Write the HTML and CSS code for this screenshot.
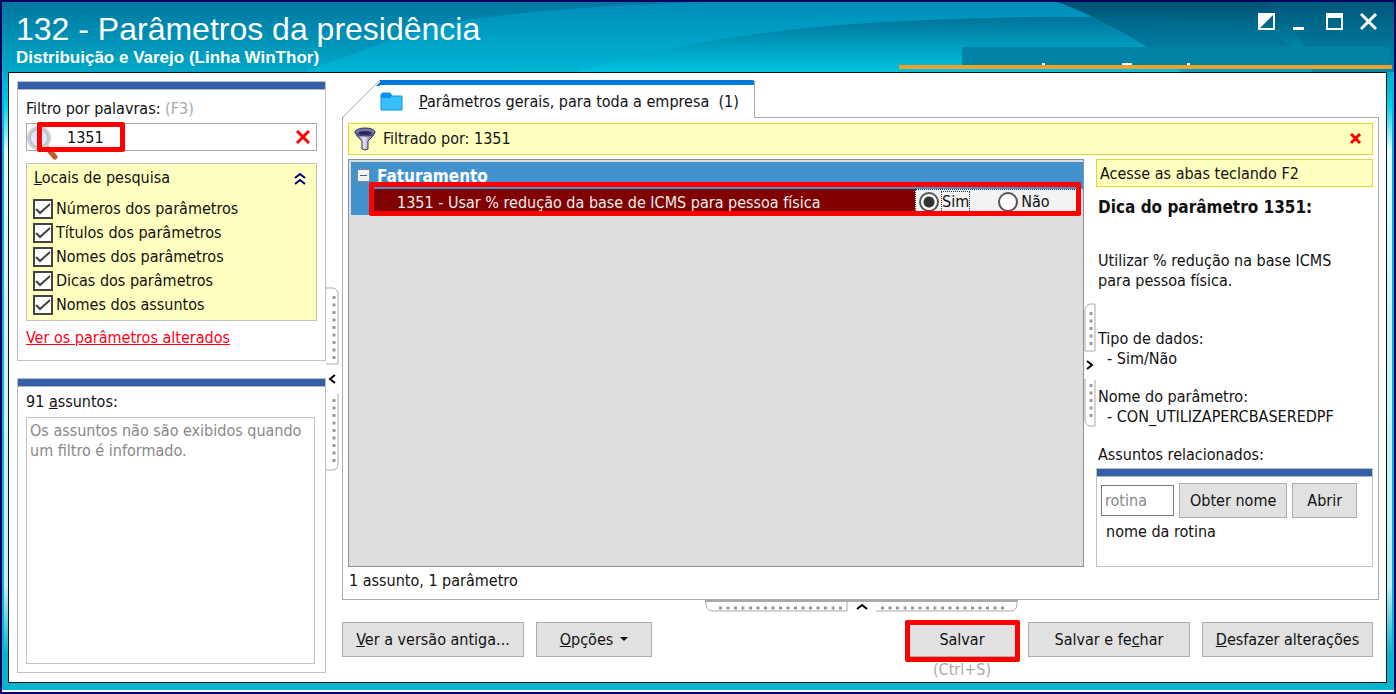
FILE: index.html
```html
<!DOCTYPE html>
<html lang="pt-BR">
<head>
    <meta charset="UTF-8">
    <meta name="viewport" content="width=device-width, initial-scale=1.0">
    <title>132 - Parâmetros da presidência</title>
    <link rel="stylesheet" href="styles.css">
</head>
<body>
    <div class="window">
        <header class="titlebar">
            <svg class="waves" viewBox="0 0 1392 70" preserveAspectRatio="none" aria-hidden="true">
                <defs>
                    <linearGradient id="base" x1="0" y1="0" x2="0" y2="1">
                        <stop offset="0" stop-color="#0077a0"/>
                        <stop offset="1" stop-color="#00a9c9"/>
                    </linearGradient>
                    <linearGradient id="mid" x1="0" y1="0" x2="0" y2="1">
                        <stop offset="0" stop-color="#008db8"/>
                        <stop offset="1" stop-color="#00b4d4"/>
                    </linearGradient>
                    <linearGradient id="low" x1="0" y1="0" x2="0" y2="1">
                        <stop offset="0" stop-color="#007299"/>
                        <stop offset="1" stop-color="#00c4e0"/>
                    </linearGradient>
                    <linearGradient id="dark" x1="0" y1="0" x2="0" y2="1">
                        <stop offset="0" stop-color="#005070"/>
                        <stop offset="0.65" stop-color="#0085a8"/>
                        <stop offset="1" stop-color="#00a5c4"/>
                    </linearGradient>
                    <linearGradient id="corner" x1="0" y1="0" x2="0" y2="1">
                        <stop offset="0" stop-color="#00587a"/>
                        <stop offset="1" stop-color="#0088ac"/>
                    </linearGradient>
                </defs>
                <rect width="1392" height="70" fill="url(#base)"/>
                <path d="M430 24Q520 6 700 0H1392V70H300Z" fill="url(#mid)"/>
                <path d="M574 70C690 36 800 22 950 17Q1130 10 1250 26L1392 60V70Z" fill="url(#low)"/>
                <path d="M1055 0Q1095 14 1145 45L1180 70H1392V0Z" fill="url(#dark)"/>
                <path d="M1093 15Q1180 13 1262 24L1290 45H1145Q1120 29 1093 15Z" fill="#006f94" opacity="0.4"/>
                <path d="M1260 0Q1286 16 1303 45L1310 70H1392V0Z" fill="url(#corner)"/>
            </svg>
            <div class="titles">
                <h1>132 - Parâmetros da presidência</h1>
                <p>Distribuição e Varejo (Linha WinThor)</p>
            </div>
            <div class="window-buttons">
                <button type="button" aria-label="Alternar cor">
                    <svg width="18" height="18"><path d="M1 1h15v15H1z" fill="none" stroke="#fff" stroke-width="2"/><path d="M0 0h17L0 17z" fill="#fff"/></svg>
                </button>
                <button type="button" aria-label="Minimizar">
                    <svg width="18" height="18"><path d="M1 14h11v3H1z" fill="#fff"/></svg>
                </button>
                <button type="button" aria-label="Maximizar">
                    <svg width="18" height="18"><path d="M1 2h15v14H1z" fill="none" stroke="#fff" stroke-width="2"/><path d="M0 0h17v5H0z" fill="#fff"/></svg>
                </button>
                <button type="button" aria-label="Fechar">
                    <svg width="18" height="18"><path d="M1 1l15 15M16 1L1 16" stroke="#fff" stroke-width="3"/></svg>
                </button>
            </div>
            <div class="user-strip">
                <svg width="427" height="18" aria-hidden="true"><path d="M80 17h3M160 17h10M225 17h3" stroke="#fff" stroke-width="2"/></svg>
            </div>
        </header>

        <main class="content">
            <aside class="sidebar">
                <section class="panel search-panel">
                    <label for="filter">Filtro por palavras: <span class="muted">(F3)</span></label>
                    <div class="search-box">
                        <input type="text" id="filter" value="1351">
                        <svg class="lens" width="34" height="38" aria-hidden="true">
                            <path d="M22 26l7 8" stroke="#c9572f" stroke-width="5" stroke-linecap="round"/>
                            <circle cx="13" cy="15" r="10" fill="#dceafb" stroke="#cfcfcf" stroke-width="4"/>
                            <circle cx="13" cy="15" r="9" fill="none" stroke="#a9bcd6"/>
                        </svg>
                        <button type="button" class="clear" aria-label="Limpar filtro">
                            <svg width="14" height="14"><path d="M1 1l12 12M13 1L1 13" stroke="#f00" stroke-width="3"/></svg>
                        </button>
                        <span class="highlight"></span>
                    </div>
                    <fieldset class="places">
                        <div class="places-head">
                            <span><u>L</u>ocais de pesquisa</span>
                            <button type="button" aria-label="Recolher">
                                <svg width="12" height="13"><path d="M1 6l5-4 5 4M1 12l5-4 5 4" fill="none" stroke="#000080" stroke-width="2"/></svg>
                            </button>
                        </div>
                        <label><input type="checkbox" checked>Números dos parâmetros</label>
                        <label><input type="checkbox" checked>Títulos dos parâmetros</label>
                        <label><input type="checkbox" checked>Nomes dos parâmetros</label>
                        <label><input type="checkbox" checked>Dicas dos parâmetros</label>
                        <label><input type="checkbox" checked>Nomes dos assuntos</label>
                    </fieldset>
                    <a href="#">Ver os parâmetros alterados</a>
                </section>
                <section class="panel subjects-panel">
                    <h2>91 <u>a</u>ssuntos:</h2>
                    <div class="subjects">Os assuntos não são exibidos quando um filtro é informado.</div>
                </section>
            </aside>

            <div class="splitter">
                <svg width="14" height="184" aria-hidden="true">
                    <path d="M0 1h7q5 1 5 7v69H0M12 107v69q0 7-5 7H0" fill="none" stroke="#aaa"/>
                    <path d="M8 9v66M8 112v66" stroke="#999" stroke-width="3" stroke-dasharray="3 4.5"/>
                    <path d="M9 88l-5 4 5 4" fill="none" stroke="#000" stroke-width="2"/>
                </svg>
            </div>

            <div class="main">
                <div class="tabs">
                    <svg width="38" height="38" aria-hidden="true">
                        <path d="M38 1L1 38h37z" fill="#fff"/>
                        <path d="M39 1L34 6h5z" fill="#0078d7"/>
                        <path d="M38 0L0 38" stroke="#aaa" fill="none"/>
                    </svg>
                    <button type="button" class="tab">
                        <svg width="24" height="20" aria-hidden="true">
                            <path d="M1 3q0-2 2-2h7l2 3h10v14H1z" fill="#38bfff" stroke="#0a93ee"/>
                            <path d="M1 4q0-3 3-3h6l2 3-2 2H1z" fill="#0a93ee"/>
                        </svg>
                        <span><u>P</u>arâmetros gerais, para toda a empresa &nbsp;(1)</span>
                    </button>
                </div>
                <div class="page">
                    <div class="filter-bar">
                        <svg width="22" height="24" aria-hidden="true">
                            <defs>
                                <linearGradient id="metal">
                                    <stop offset="0" stop-color="#43436f"/>
                                    <stop offset="0.45" stop-color="#e6e6fb"/>
                                    <stop offset="1" stop-color="#3b3b70"/>
                                </linearGradient>
                            </defs>
                            <path d="M1 5q1 4 7 9v8q3 2 6 0v-8q6-5 7-9z" fill="url(#metal)" stroke="#38385c"/>
                            <ellipse cx="11" cy="5" rx="10" ry="4" fill="#7777b4" stroke="#33335a"/>
                            <ellipse cx="11" cy="6" rx="7" ry="2" fill="#292960"/>
                        </svg>
                        <span>Filtrado por: 1351</span>
                        <button type="button" aria-label="Remover filtro">
                            <svg width="12" height="12"><path d="M1 1l9 9M10 1L1 10" stroke="#f00" stroke-width="3"/></svg>
                        </button>
                    </div>
                    <div class="columns">
                        <div class="tree">
                            <div class="group">
                                <button type="button" class="toggle" aria-label="Recolher grupo"></button>
                                <span>Faturamento</span>
                            </div>
                            <div class="param">
                                <span class="param-name">1351 - Usar % redução da base de ICMS para pessoa física</span>
                                <div class="param-value">
                                    <label><input type="radio" name="p1351" checked><span class="focused">Sim</span></label>
                                    <label><input type="radio" name="p1351"><span>Não</span></label>
                                </div>
                                <span class="highlight"></span>
                            </div>
                        </div>
                        <div class="splitter details-splitter">
                            <svg width="12" height="124" aria-hidden="true">
                                <path d="M11 1H6Q1 2 1 8v40h10V1M1 76v40q0 6 5 7h5V77" fill="none" stroke="#aaa"/>
                                <path d="M7 9v36M7 81v36" stroke="#999" stroke-width="3" stroke-dasharray="3 4.5"/>
                                <path d="M3 58l5 4-5 4" fill="none" stroke="#000" stroke-width="2"/>
                            </svg>
                        </div>
                        <section class="details">
                            <div class="hint">Acesse as abas teclando F2</div>
                            <div class="details-text">
                                <h2>Dica do parâmetro 1351:</h2>
                                <p class="tip">Utilizar % redução na base ICMS para pessoa física.</p>
                                <dl>
                                    <dt>Tipo de dados:</dt>
                                    <dd>- Sim/Não</dd>
                                    <dt>Nome do parâmetro:</dt>
                                    <dd>- CON_UTILIZAPERCBASEREDPF</dd>
                                </dl>
                                <h3>Assuntos relacionados:</h3>
                            </div>
                            <div class="panel related">
                                <div class="routine">
                                    <input type="text" placeholder="rotina" aria-label="Rotina">
                                    <button type="button" class="btn">Obter nome</button>
                                    <button type="button" class="btn open">Abrir</button>
                                </div>
                                <p>nome da rotina</p>
                            </div>
                        </section>
                    </div>
                    <p class="status">1 assunto, 1 parâmetro</p>
                </div>
                <div class="bottom-splitter">
                    <svg width="314" height="13" aria-hidden="true">
                        <path d="M1 0v5q1 6 7 6h134V0M171 11h134q6 0 7-6V0" fill="none" stroke="#aaa"/>
                        <path d="M0 1h313" stroke="#aaa" stroke-width="2"/>
                        <path d="M14 8h126M176 8h126" stroke="#999" stroke-width="3" stroke-dasharray="3 4.5"/>
                        <path d="M152 9l5-4 5 4" fill="none" stroke="#000" stroke-width="2"/>
                    </svg>
                </div>
                <footer class="actions">
                    <button type="button" class="btn wide"><span><u>V</u>er a versão antiga...</span></button>
                    <button type="button" class="btn options">
                        <span><u>O</u>pções</span>
                        <svg width="8" height="5" aria-hidden="true"><path d="M0 0h8L4 4z"/></svg>
                    </button>
                    <div class="save">
                        <button type="button" class="btn">Salvar</button>
                        <small>(Ctrl+S)</small>
                        <span class="highlight"></span>
                    </div>
                    <button type="button" class="btn medium"><span>Salvar e fe<u>c</u>har</span></button>
                    <button type="button" class="btn last"><span><u>D</u>esfazer alterações</span></button>
                </footer>
            </div>
        </main>
    </div>
</body>
</html>
```

FILE: styles.css
```css
* {
    box-sizing: border-box;
}

body {
    margin: 0;
    height: 100vh;
    padding: 2px;
    background-color: #000060;
    color: #111;
    font-family: "DejaVu Sans Condensed", "DejaVu Sans", sans-serif;
    font-stretch: condensed;
    font-size: 16px;
    line-height: 20px;
}

h1, h2, h3, p, dl, dd {
    margin: 0;
    font-size: inherit;
    font-weight: normal;
}

button, input {
    margin: 0;
    font: inherit;
    color: inherit;
}

button {
    padding: 0;
    border: none;
    background: none;
}

svg {
    display: block;
    flex: none;
}

.window {
    display: flex;
    flex-direction: column;
    height: 100%;
    padding: 0 7px 7px 6px;
    border-bottom: 2px solid white;
    background: linear-gradient(#00a9c9 10%, #00d2e6 15%, #e8ffff 22%, #d4f4f6 40%, #c4eef2 85%, #04b4cc 95%);
    box-shadow: inset 2px 0 #04b4cc, inset -2px 0 #04b4cc;
}

/* Title bar */
.titlebar {
    position: relative;
    display: flex;
    justify-content: space-between;
    flex: none;
    height: 70px;
    margin: 0 -7px 0 -6px;
    padding: 9px 16px 0 14px;
    color: white;
    font-family: "Liberation Sans", Arial, sans-serif;
}

.waves {
    position: absolute;
    top: 0;
    left: 0;
    width: 100%;
    height: 100%;
}

.titles {
    position: relative;
}

.titles h1 {
    font-size: 32px;
    line-height: 36px;
}

.titles p {
    font-size: 17px;
    font-weight: bold;
    line-height: 22px;
}

.window-buttons {
    position: relative;
    display: flex;
    align-items: flex-start;
    gap: 16px;
    padding-top: 2px;
}

.user-strip {
    position: absolute;
    right: 5px;
    bottom: 7px;
    width: 427px;
    height: 18px;
    background-color: #0083a5;
}

.user-strip::after {
    content: "";
    position: absolute;
    top: 18px;
    right: -3px;
    width: 493px;
    height: 4px;
    background-color: #f0a02c;
}

/* Content */
.content {
    display: flex;
    flex: 1;
    min-height: 0;
    padding: 8px 7px 9px 8px;
    border: 1px solid #111;
    background-color: white;
}

.sidebar {
    display: flex;
    flex-direction: column;
    gap: 17px;
    width: 309px;
}

.panel {
    border: 1px solid #c0c0c0;
    background-color: white;
}

.panel::before {
    content: "";
    display: block;
    height: 7px;
    border-bottom: 1px solid #b4b4b4;
    background-color: #335faa;
}

.search-panel {
    height: 280px;
    padding: 0 8px;
}

.search-panel::before {
    margin: 0 -8px;
}

.search-panel > label {
    display: block;
    padding: 9px 0 4px;
}

.muted {
    color: #aaa;
}

.search-box {
    position: relative;
    display: flex;
}

.search-box input {
    width: 100%;
    height: 28px;
    padding: 0 40px;
    border: 1px solid #aaa;
}

.lens {
    position: absolute;
    top: 0;
    left: 0;
}

.clear {
    position: absolute;
    top: 7px;
    right: 7px;
}

.highlight {
    position: absolute;
    border: 5px solid #f00;
    border-radius: 2px;
    pointer-events: none;
}

.search-box .highlight {
    top: -1px;
    left: 11px;
    width: 88px;
    height: 30px;
}

.places {
    margin: 12px 0 7px;
    padding: 4px 6px 3px;
    border: 1px solid #c0c0c0;
    background-color: #ffffc0;
}

.places-head {
    display: flex;
    align-items: center;
    justify-content: space-between;
    padding: 0 4px 9px 1px;
}

.places label {
    display: flex;
    align-items: center;
    gap: 3px;
    height: 24px;
}

.places input {
    appearance: none;
    width: 20px;
    height: 20px;
    border: 2px solid #444;
    background: white url("data:image/svg+xml,%3Csvg xmlns='http://www.w3.org/2000/svg' width='16' height='16'%3E%3Cpath d='M1 8l4 4L15 3' fill='none' stroke='%23444' stroke-width='2'/%3E%3C/svg%3E") center no-repeat;
}

.search-panel a {
    color: #ff0018;
}

.subjects-panel {
    display: flex;
    flex: 1;
    flex-direction: column;
    padding: 0 10px 8px 8px;
}

.subjects-panel::before {
    flex: none;
    margin: 0 -10px 0 -8px;
}

.subjects-panel h2 {
    padding: 5px 0;
}

.subjects {
    flex: 1;
    padding: 3px;
    border: 1px solid #c0c0c0;
    color: #888;
}

.splitter {
    display: flex;
    flex: none;
    align-items: center;
    width: 16px;
    padding-top: 4px;
}

.main {
    display: flex;
    flex: 1;
    flex-direction: column;
    min-width: 0;
}

.tabs {
    display: flex;
    height: 38px;
    margin-top: -1px;
}

.tabs svg {
    position: relative;
}

.tab {
    position: relative;
    display: flex;
    align-items: center;
    gap: 15px;
    padding: 0 15px 0 0;
    border-top: 5px solid #0078d7;
    border-right: 1px solid #aaa;
    border-top-right-radius: 3px;
    background-color: white;
}

.page {
    display: flex;
    flex: 1;
    flex-direction: column;
    min-height: 0;
    margin-top: -1px;
    padding: 5px 5px 8px;
    border: 1px solid #aaa;
}

.filter-bar {
    display: flex;
    align-items: center;
    gap: 7px;
    height: 32px;
    padding: 0 10px 0 5px;
    border: 1px solid #dcdc28;
    background-color: #ffffc0;
}

.filter-bar button {
    margin-left: auto;
}

.columns {
    display: flex;
    flex: 1;
    min-height: 0;
    margin-top: 4px;
}

.tree {
    flex: 1;
    padding: 2px 0 0 2px;
    border: 1px solid #8a9099;
    background-color: #dedede;
}

.group {
    display: flex;
    align-items: center;
    gap: 7px;
    height: 27px;
    padding-left: 6px;
    background-color: #4292cd;
    color: white;
    font-size: 17px;
    font-weight: bold;
}

.toggle {
    width: 13px;
    height: 13px;
    border: 1px solid #888;
    background: linear-gradient(#335faa, #335faa) center / 7px 1px no-repeat #f2f2f2;
}

.param {
    position: relative;
    display: flex;
    height: 26px;
    padding-right: 2px;
    border-left: 22px solid #4292cd;
}

.param-name {
    flex: 1;
    padding: 4px 0 0 24px;
    background-color: #800000;
    color: #eee;
    white-space: nowrap;
}

.param-value {
    display: flex;
    gap: 29px;
    width: 166px;
    padding-left: 3px;
    border: 1px dotted #333;
    background-color: #f3f3f3;
}

.param-value label {
    display: flex;
    align-items: center;
    gap: 3px;
}

.param-value input {
    appearance: none;
    width: 20px;
    height: 20px;
    border: 2px solid #555;
    border-radius: 50%;
    background-color: white;
}

.param-value input:checked {
    background: radial-gradient(circle, #333 5px, white 6px);
}

.focused {
    outline: 1px dotted #333;
}

.param .highlight {
    top: -7px;
    right: 2px;
    bottom: -1px;
    left: -4px;
}

.details-splitter {
    width: 12px;
}

.details {
    display: flex;
    flex-direction: column;
    width: 277px;
}

.hint {
    padding: 4px 3px 2px;
    border: 1px solid #dcdc28;
    background-color: #ffffc0;
}

.details-text {
    flex: 1;
    padding: 10px 0 0 2px;
}

.details-text h2 {
    font-size: 17px;
    font-weight: bold;
}

.tip {
    padding: 34px 24px 38px 0;
}

dd {
    padding: 0 0 18px 9px;
}

.related {
    height: 99px;
}

.routine {
    display: flex;
    align-items: center;
    gap: 5px;
    padding: 6px 4px 4px;
}

.routine input {
    width: 73px;
    height: 31px;
    padding: 0 3px;
    border: 1px solid #777;
}

.routine input::placeholder {
    color: #888;
}

.routine .open {
    width: 65px;
}

.related p {
    padding-left: 9px;
}

.status {
    padding: 4px 1px 0;
}

.bottom-splitter {
    display: flex;
    justify-content: center;
    padding-left: 3px;
}

.btn {
    flex: none;
    height: 35px;
    padding: 0 10px;
    border: 1px solid #adadad;
    background-color: #e1e1e1;
    white-space: nowrap;
}

.actions {
    display: flex;
    height: 60px;
    padding: 9px 6px 0 0;
}

.wide {
    width: 182px;
}

.options {
    display: flex;
    align-items: center;
    justify-content: center;
    gap: 7px;
    width: 116px;
    margin-left: 12px;
}

.save {
    position: relative;
    display: flex;
    flex-direction: column;
    align-items: center;
    width: 110px;
    margin: 0 11px 0 auto;
}

.save .btn {
    width: 100%;
}

.save small {
    padding-top: 3px;
    color: #aaa;
    font-size: 16px;
}

.save .highlight {
    top: -2px;
    right: -3px;
    left: -2px;
    height: 42px;
}

.medium {
    width: 162px;
}

.last {
    width: 171px;
    margin-left: 12px;
}
```
